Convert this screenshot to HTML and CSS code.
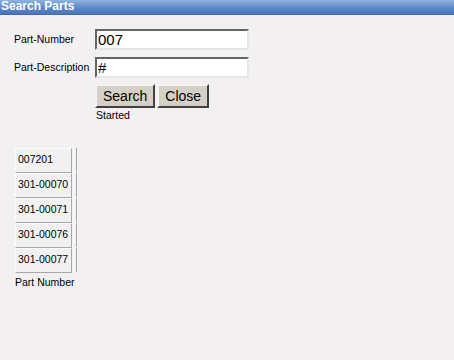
FILE: index.html
```html
<!DOCTYPE html>
<html lang="en">
<head>
    <meta charset="UTF-8">
    <title>Search Parts</title>
    <link rel="stylesheet" href="styles.css">
</head>
<body>
    <div class="title-bar">Search Parts</div>
    <div class="search-form">
        <div class="form-row">
            <label class="field-label">Part-Number</label>
            <input class="field-input" type="text" value="007">
        </div>
        <div class="form-row">
            <label class="field-label">Part-Description</label>
            <input class="field-input" type="text" value="#">
        </div>
        <div class="form-actions">
            <div class="buttons">
                <button class="btn">Search</button>
                <button class="btn">Close</button>
            </div>
            <div class="status">Started</div>
        </div>
    </div>
    <div class="results">
        <div class="result-row"><div class="result-cell">007201</div><div class="result-edge"></div></div>
        <div class="result-row"><div class="result-cell">301-00070</div><div class="result-edge"></div></div>
        <div class="result-row"><div class="result-cell">301-00071</div><div class="result-edge"></div></div>
        <div class="result-row"><div class="result-cell">301-00076</div><div class="result-edge"></div></div>
        <div class="result-row"><div class="result-cell">301-00077</div><div class="result-edge"></div></div>
        <div class="results-caption">Part Number</div>
    </div>
</body>
</html>
```

FILE: styles.css
```css
body {
    margin: 0;
    width: 454px;
    height: 360px;
    background: #f2f0f0;
    font-family: "Liberation Sans", Arial, sans-serif;
    font-size: 10.5px;
    color: #000;
    overflow: hidden;
}

.title-bar {
    height: 14px;
    line-height: 13px;
    padding-left: 1px;
    background: linear-gradient(#8db3e0, #5a86c8 60%, #4a74bd);
    border-bottom: 1px solid #4468b0;
    color: #fff;
    font-weight: bold;
    font-size: 12px;
}

.search-form {
    padding: 14px 0 0 14px;
}

.form-row {
    display: flex;
    align-items: center;
    height: 20px;
    margin-bottom: 8px;
}

.field-label {
    width: 81px;
}

.field-input {
    box-sizing: border-box;
    width: 154px;
    height: 21px;
    margin: 0;
    padding: 0 1px;
    border: 2px solid;
    border-color: #646464 #e6e6e6 #e6e6e6 #646464;
    background: #fff;
    font-family: "Liberation Sans", Arial, sans-serif;
    font-size: 15px;
    outline: none;
}

.form-actions {
    margin-left: 81px;
    margin-top: -1px;
}

.buttons {
    display: flex;
    gap: 2px;
}

.btn {
    box-sizing: border-box;
    height: 24px;
    margin: 0;
    padding: 0 6px;
    border: 2px solid;
    border-color: #f4f4f4 #404040 #404040 #f4f4f4;
    background: #d4d0c8;
    font-family: "Liberation Sans", Arial, sans-serif;
    font-size: 14px;
    color: #000;
}

.status {
    padding-left: 1px;
    line-height: 14px;
}

.results {
    padding: 26px 0 0 15px;
}

.result-row {
    display: flex;
    height: 25px;
}

.result-cell {
    box-sizing: border-box;
    width: 57px;
    height: 25px;
    padding: 4px 0 0 2px;
    border: 1px solid;
    border-color: #fafafa #a8a8a8 #a8a8a8 #fafafa;
}

.result-edge {
    box-sizing: border-box;
    width: 4px;
    height: 24px;
    margin-left: 1px;
    border-left: 1px solid #fafafa;
    border-right: 1px solid #a8a8a8;
}

.results-caption {
    padding-top: 3px;
}
```
